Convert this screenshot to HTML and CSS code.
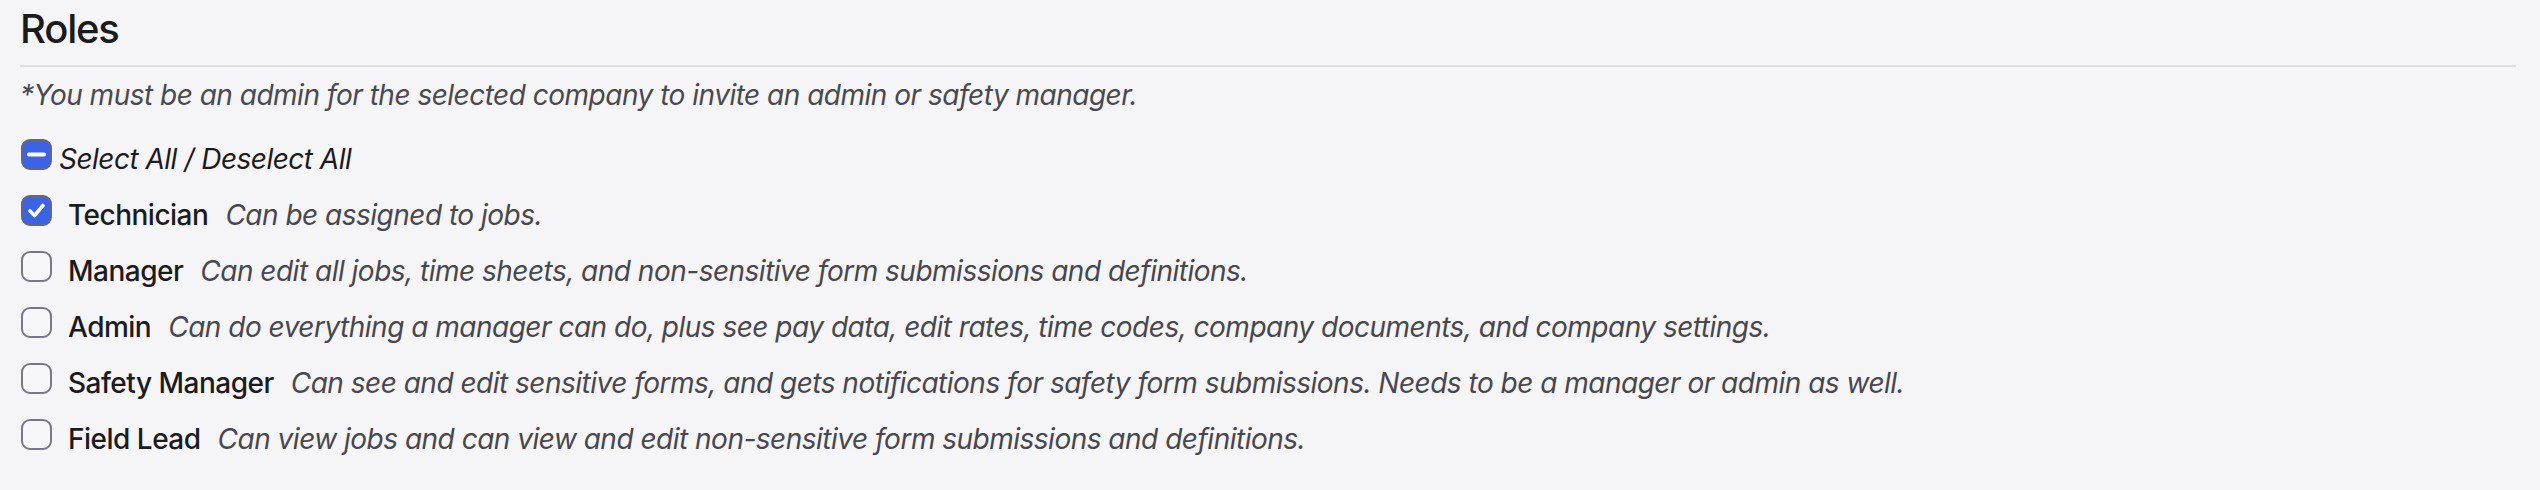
FILE: index.html
```html
<!DOCTYPE html>
<html lang="en">
  <head>
    <meta charset="UTF-8" />
    <meta name="viewport" content="width=device-width, initial-scale=1.0" />
    <title>Roles</title>
    <link rel="stylesheet" href="styles.css">
  </head>
  <body>
    <div class="roles">
      <h2 class="roles-title">Roles</h2>
      <p class="roles-note">*You must be an admin for the selected company to invite an admin or safety manager.</p>

      <div class="role-row select-all">
        <span class="box checked">
          <svg viewBox="0 0 31 31" width="31" height="31"><line x1="8" y1="15.5" x2="23" y2="15.5" stroke="#fff" stroke-width="4" stroke-linecap="round" /></svg>
        </span>
        <span class="select-all-text">Select All / Deselect All</span>
      </div>

      <div class="role-row">
        <span class="box checked">
          <svg viewBox="0 0 31 31" width="31" height="31"><polyline points="9,16 13.5,20.5 22,10.5" fill="none" stroke="#fff" stroke-width="3.6" stroke-linecap="round" stroke-linejoin="round" /></svg>
        </span>
        <span class="role-name">Technician</span>
        <span class="role-desc">Can be assigned to jobs.</span>
      </div>

      <div class="role-row">
        <span class="box"></span>
        <span class="role-name">Manager</span>
        <span class="role-desc">Can edit all jobs, time sheets, and non-sensitive form submissions and definitions.</span>
      </div>

      <div class="role-row">
        <span class="box"></span>
        <span class="role-name">Admin</span>
        <span class="role-desc">Can do everything a manager can do, plus see pay data, edit rates, time codes, company documents, and company settings.</span>
      </div>

      <div class="role-row">
        <span class="box"></span>
        <span class="role-name">Safety Manager</span>
        <span class="role-desc">Can see and edit sensitive forms, and gets notifications for safety form submissions. Needs to be a manager or admin as well.</span>
      </div>

      <div class="role-row">
        <span class="box"></span>
        <span class="role-name">Field Lead</span>
        <span class="role-desc">Can view jobs and can view and edit non-sensitive form submissions and definitions.</span>
      </div>
    </div>
  </body>
</html>
```

FILE: styles.css
```css
body {
  margin: 0;
  background-color: #f5f4f7;
  font-family: Inter, "Noto Sans", Arial, sans-serif;
  color: #1b1b1e;
}
.roles {
  padding: 4px 24px 0 20px;
}
.roles-title {
  margin: 0;
  font-size: 40px;
  font-weight: 500;
  letter-spacing: -0.03em;
  line-height: 50px;
  padding-bottom: 11px;
  border-bottom: 2px solid #dfdde2;
}
.roles-note {
  margin: 8px 0 24px;
  font-size: 28px;
  line-height: 40px;
  font-style: italic;
  letter-spacing: -0.018em;
  color: #4a494f;
}
.role-row {
  display: flex;
  align-items: flex-start;
  font-size: 28px;
  line-height: 40px;
  letter-spacing: -0.018em;
  margin-bottom: 16px;
  padding-left: 1px;
}
.box {
  flex: none;
  width: 31px;
  height: 31px;
  box-sizing: border-box;
  border: 2px solid #767888;
  border-radius: 9px;
  background-color: #f7f6f9;
  margin-right: 16px;
  position: relative;
}
.box.checked {
  background-color: #3b63e3;
  border-color: #5f6786;
}
.box svg {
  position: absolute;
  left: -2px;
  top: -2px;
}
.select-all .box {
  margin-right: 7px;
}
.select-all-text {
  font-style: italic;
  color: #1b1b1e;
}
.role-name {
  font-weight: 500;
  color: #1b1b1e;
  margin-right: 17px;
}
.role-desc {
  font-style: italic;
  color: #48474d;
}
```
